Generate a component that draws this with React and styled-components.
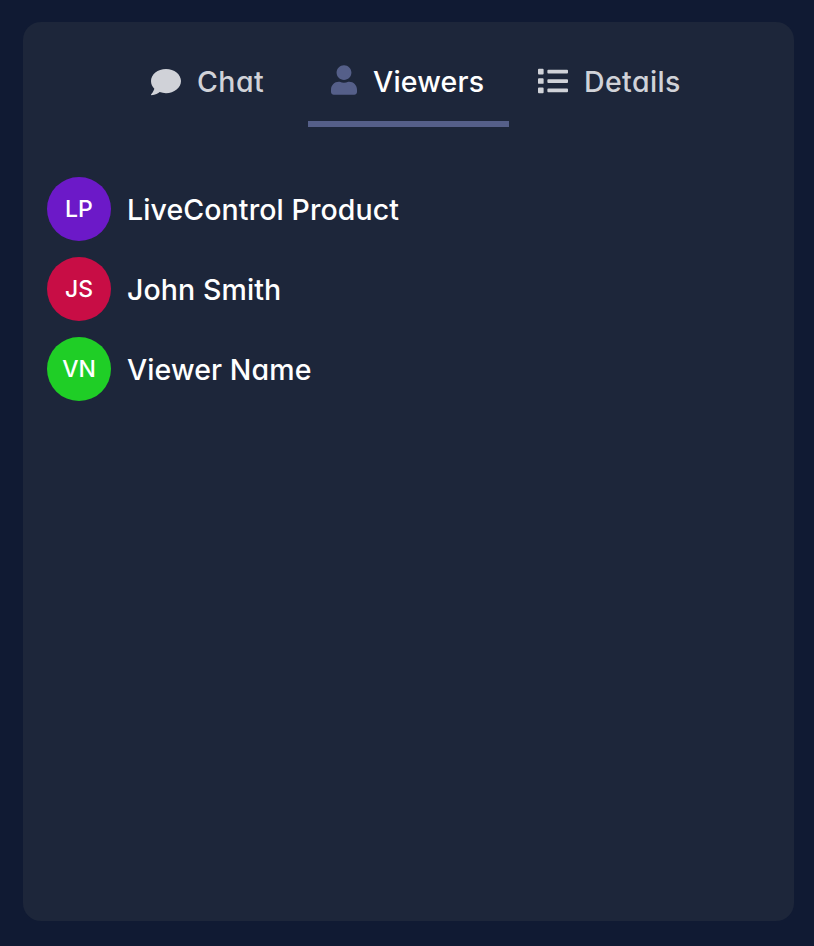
import React from 'react';
import styled, { createGlobalStyle } from 'styled-components';
import { FaComment, FaUser, FaList } from 'react-icons/fa';

const viewers = [
  { initials: 'LP', name: 'LiveControl Product', color: '#6c19c8' },
  { initials: 'JS', name: 'John Smith', color: '#c80d45' },
  { initials: 'VN', name: 'Viewer Name', color: '#1fce26' },
];

const App = () => (
  <Page>
    <GlobalStyle />
    <Panel>
      <Tabs>
        <ChatTab>
          <ChatIcon />
          <TabLabel>Chat</TabLabel>
        </ChatTab>
        <ViewersTab>
          <ViewersIcon />
          <TabLabel $active>Viewers</TabLabel>
        </ViewersTab>
        <DetailsTab>
          <DetailsIcon />
          <TabLabel>Details</TabLabel>
        </DetailsTab>
      </Tabs>
      <ViewerList>
        {viewers.map((viewer) => (
          <ViewerRow key={viewer.name}>
            <Avatar $color={viewer.color}>{viewer.initials}</Avatar>
            <ViewerName>{viewer.name}</ViewerName>
          </ViewerRow>
        ))}
      </ViewerList>
    </Panel>
  </Page>
);

const GlobalStyle = createGlobalStyle`
  html, body {
    margin: 0;
    padding: 0;
    background-color: #101a33;
  }
`;

const Page = styled.div`
  box-sizing: border-box;
  width: 814px;
  height: 946px;
  padding: 22px 20px 25px 23px;
  font-family: "Inter", "Lato", sans-serif;
  font-feature-settings: "cv11" 1;
`;

const Panel = styled.div`
  height: 100%;
  border-radius: 18px;
  background-color: #1d263a;
`;

const Tabs = styled.div`
  display: grid;
  grid-template-columns: 1fr 201px 1fr;
  height: 105px;
`;

const Tab = styled.div`
  display: flex;
  align-items: center;
  gap: 16px;
  height: 99px;
  padding-top: 20px;
  box-sizing: border-box;
`;

const ChatTab = styled(Tab)`
  justify-content: flex-end;
  padding-right: 44px;
`;

const ViewersTab = styled(Tab)`
  height: 105px;
  padding-left: 23px;
  border-bottom: 6px solid #555f89;
`;

const DetailsTab = styled(Tab)`
  padding-left: 29px;
`;

const TabLabel = styled.span`
  font-size: 28.5px;
  font-weight: ${(props) => (props.$active ? 550 : 500)};
  letter-spacing: ${(props) => (props.$active ? '0.2px' : '0.4px')};
  color: ${(props) => (props.$active ? '#ffffff' : '#d0d2d8')};
`;

const ChatIcon = styled(FaComment)`
  width: 30px;
  height: 30px;
  color: #d0d2d8;
`;

const ViewersIcon = styled(FaUser)`
  width: 26px;
  height: 30px;
  margin-top: -3px;
  color: #555f89;
`;

const DetailsIcon = styled(FaList)`
  width: 30px;
  height: 30px;
  margin-top: -2px;
  color: #d0d2d8;
`;

const ViewerList = styled.div`
  display: flex;
  flex-direction: column;
  gap: 16px;
  padding: 50px 24px 0;
`;

const ViewerRow = styled.div`
  display: flex;
  align-items: center;
  gap: 16px;
`;

const Avatar = styled.div`
  display: flex;
  align-items: center;
  justify-content: center;
  width: 64px;
  height: 64px;
  border-radius: 50%;
  background-color: ${(props) => props.$color};
  color: #ffffff;
  font-size: 23px;
  font-weight: 550;
`;

const ViewerName = styled.span`
  font-size: 28.5px;
  font-weight: 550;
  letter-spacing: 0.1px;
  color: #ffffff;
`;

export default App;
